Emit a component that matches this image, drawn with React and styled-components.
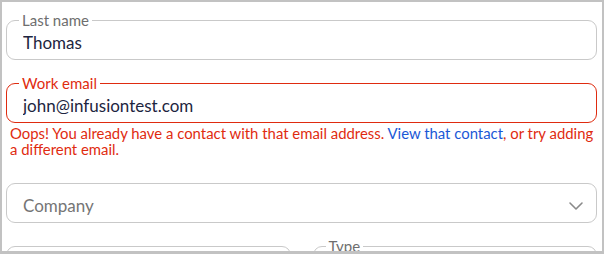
import styled, {createGlobalStyle} from "styled-components";
import {ChevronDown} from "lucide-react";

const GlobalStyle = createGlobalStyle`
  html, body {
    margin: 0;
    padding: 0;
    background: #ffffff;
  }
  body {
    font-family: Lato, "Noto Sans", sans-serif;
  }
`

const Frame = styled.div`
  box-sizing: border-box;
  width: 604px;
  height: 254px;
  overflow: hidden;
  border: 2px solid #c2c2c2;
  border-bottom-width: 3px;
  padding: 11px 5px 0 4px;
  display: flex;
  flex-direction: column;
  background: #fff;
`

const Box = styled.fieldset`
  box-sizing: border-box;
  margin: 0;
  padding: 0 0 0 12px;
  min-width: 0;
  border: 1px solid ${p => p.$error ? '#df2b0f' : '#c9c9c9'};
  border-radius: 9px;
  display: flex;
  align-items: center;
`

const Legend = styled.legend`
  font-size: 15px;
  line-height: 14px;
  padding: 0 3px;
  color: ${p => p.$error ? '#df2b0f' : '#6e6e6e'};
  ${p => p.$hidden && `
    max-width: 0.01px;
    padding: 0;
    visibility: hidden;
  `}
`

const Input = styled.input`
  box-sizing: border-box;
  flex: 1;
  min-width: 0;
  height: 33px;
  margin-top: -1px;
  padding: 0 4px;
  border: none;
  outline: none;
  background: transparent;
  font-family: inherit;
  font-size: 17px;
  color: #1d2540;

  &::placeholder {
    color: #757575;
  }
`

const Chevron = styled(ChevronDown)`
  flex: none;
  margin-right: 8px;
  color: #8a8a8a;
`

const ErrorText = styled.p`
  margin: 2px 0 0 4px;
  font-size: 14.9px;
  line-height: 16px;
  color: #df2b0f;

  a {
    color: #1a58d6;
    text-decoration: none;
  }
`

const Row = styled.div`
  display: grid;
  grid-template-columns: 1fr 1fr;
  gap: 22px;
  margin-top: ${p => p.$gap}px;
`

const Stack = styled.div`
  margin-top: ${p => p.$gap}px;
`

const Field = ({label, value, placeholder, error, select}) => (
    <Box $error={error}>
        <Legend $error={error} $hidden={!label}>{label || '\u00a0'}</Legend>
        <Input defaultValue={value} placeholder={placeholder} readOnly={select}/>
        {select && <Chevron size={24} strokeWidth={1.6}/>}
    </Box>
)

const App = () => {
    return <>
        <GlobalStyle/>
        <Frame>
            <Field label="Last name" value="Thomas"/>
            <Stack $gap={16}>
                <Field label="Work email" value="john@infusiontest.com" error/>
                <ErrorText>
                    Oops! You already have a contact with that email address. <a href="#">View that contact</a>, or try adding a different email.
                </ErrorText>
            </Stack>
            <Stack $gap={19}>
                <Field placeholder="Company" select/>
            </Stack>
            <Row $gap={16}>
                <Field/>
                <Field label="Type"/>
            </Row>
        </Frame>
    </>;
}

export default App
